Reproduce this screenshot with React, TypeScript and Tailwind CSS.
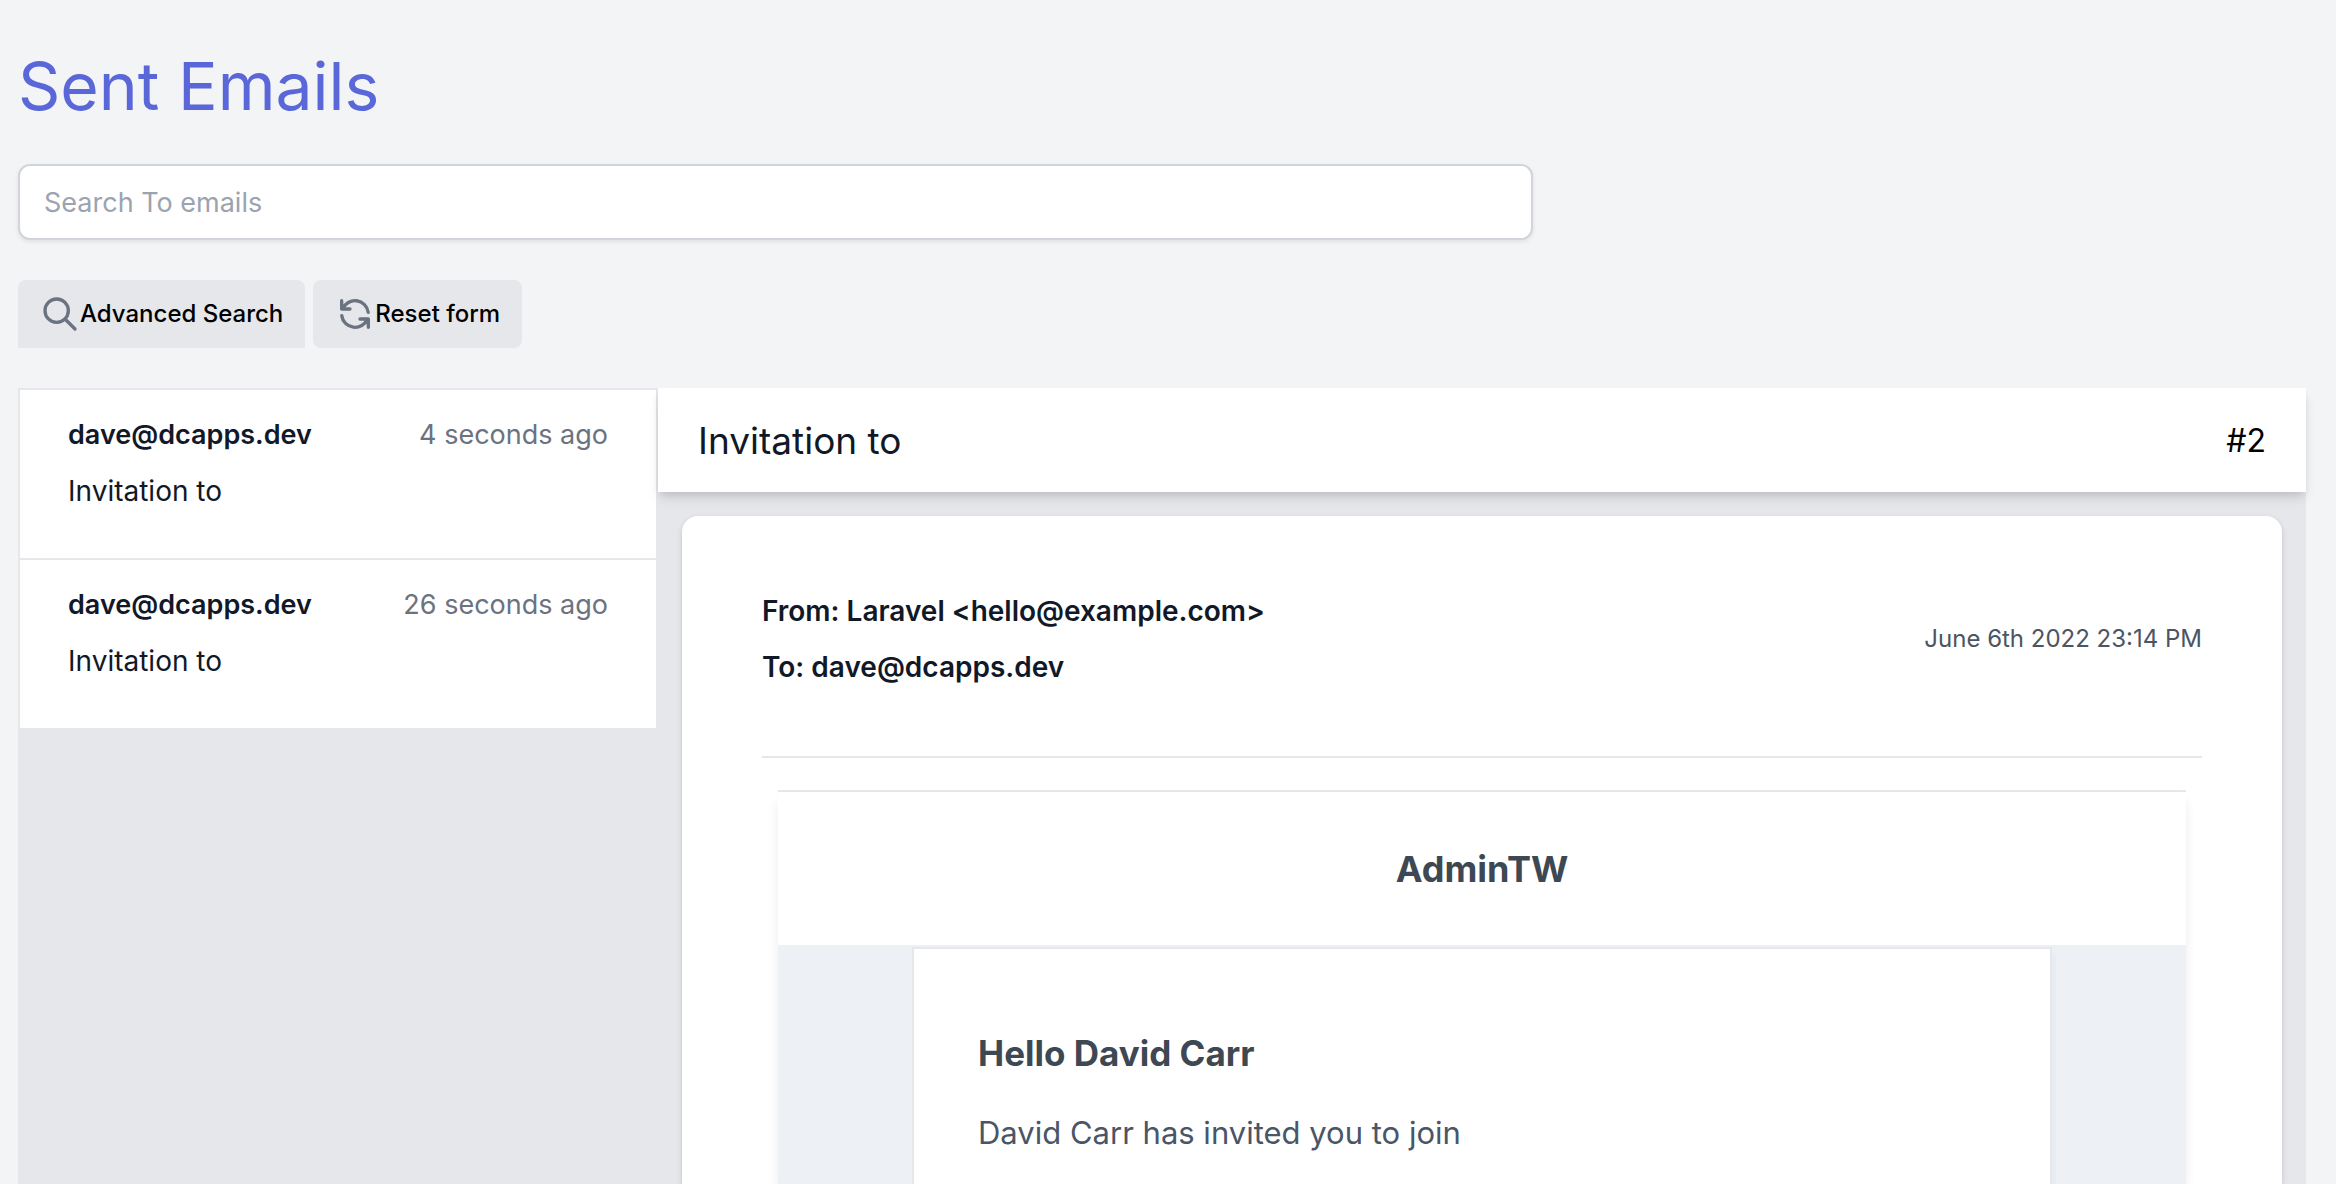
import React from "react";

type SentEmail = { to: string; sent: string; subject: string };

const emails: SentEmail[] = [
  { to: "dave@dcapps.dev", sent: "4 seconds ago", subject: "Invitation to" },
  { to: "dave@dcapps.dev", sent: "26 seconds ago", subject: "Invitation to" },
];

function Icon({ d }: { d: string }) {
  return (
    <svg
      className="size-10 shrink-0 text-[#6b7280]"
      viewBox="0 0 24 24"
      fill="none"
      stroke="currentColor"
      strokeWidth={2}
      strokeLinecap="round"
      strokeLinejoin="round"
      aria-hidden="true"
    >
      <path d={d} />
    </svg>
  );
}

function SearchForm() {
  return (
    <form onSubmit={(e) => e.preventDefault()}>
      <div className="grid grid-cols-3 gap-8">
        <input
          type="search"
          aria-label="Search To emails"
          placeholder="Search To emails"
          className="col-span-2 h-[76px] rounded-xl border-2 border-[#d1d5db] bg-white px-6 text-[27px] shadow-[0_2px_4px_rgb(0_0_0/0.08)] outline-none placeholder:text-[#9ca3af]"
        />
      </div>
      <div className="mt-10 flex gap-2">
        <button
          type="button"
          className="flex h-[68px] items-center rounded-t-lg bg-[#e5e7eb] px-[22px] text-2xl font-medium text-black"
        >
          <Icon d="M21 21l-6-6m2-5a7 7 0 11-14 0 7 7 0 0114 0z" />
          Advanced Search
        </button>
        <button
          type="reset"
          className="flex h-[68px] items-center rounded-lg bg-[#e5e7eb] px-[22px] text-2xl font-medium text-black"
        >
          <Icon d="M4 4v5h.582m15.356 2A8.001 8.001 0 004.582 9m0 0H9m11 11v-5h-.581m0 0a8.003 8.003 0 01-15.357-2m15.357 2H15" />
          Reset form
        </button>
      </div>
    </form>
  );
}

function EmailList() {
  return (
    <ul className="w-[640px] shrink-0 px-0.5">
      {emails.map((email) => (
        <li key={email.sent} className="border-t-2 border-[#e5e7eb] bg-white">
          <a href="#message" className="block px-12 pt-[25px] pb-[47px]">
            <div className="flex items-center justify-between text-[27px] leading-10">
              <h3 className="font-semibold text-[#111827]">{email.to}</h3>
              <p className="text-[#6b7280]">{email.sent}</p>
            </div>
            <p className="mt-4 text-[28px] leading-10 text-[#111827]">{email.subject}</p>
          </a>
        </li>
      ))}
    </ul>
  );
}

function MessageBody() {
  return (
    <div className="mx-4 mt-8 flex flex-1 flex-col border-t-2 border-[#e5e7eb]">
      <div className="flex flex-1 flex-col shadow-[0_8px_12px_-2px_rgb(0_0_0/0.1)]">
        <div className="bg-white pt-[58px] pb-14 text-center text-[36px] leading-[39px] font-bold text-[#3d4852]">
          AdminTW
        </div>
        <div className="flex flex-1 justify-center bg-[#edf1f6] pt-0.5">
          <div className="w-full max-w-[1140px] border-2 border-b-0 border-[#e5e7eb] bg-white px-16 pt-20 shadow-[4px_8px_0_rgb(0_0_150/0.02)]">
            <h1 className="text-[35px] leading-12 font-bold text-[#3d4852]">Hello David Carr</h1>
            <p className="mt-8 text-[31px] leading-12 text-[#4a5568]">
              David Carr has invited you to join
            </p>
          </div>
        </div>
      </div>
    </div>
  );
}

function Message() {
  return (
    <section id="message" className="flex min-w-0 flex-1 flex-col">
      <header className="flex h-[104px] shrink-0 items-center justify-between bg-white px-10 pt-0.5 shadow-[0_8px_12px_-2px_rgb(0_0_0/0.1),0_4px_8px_-2px_rgb(0_0_0/0.1)]">
        <h2 className="text-[37px] text-[#111827]">Invitation to</h2>
        <span className="text-[32px] text-black">#2</span>
      </header>
      <article className="mx-6 mt-6 flex flex-1 flex-col rounded-t-2xl bg-white px-20 pt-20 shadow-[0_2px_6px_rgb(0_0_0/0.1),0_2px_4px_rgb(0_0_0/0.06)]">
        <div className="flex items-center justify-between border-b-2 border-[#e5e7eb] pb-[74px]">
          <div className="flex flex-col gap-[26px] text-[28px] leading-[30px] font-semibold text-[#111827]">
            <p>{"From: Laravel <hello@example.com>"}</p>
            <p>To: dave@dcapps.dev</p>
          </div>
          <time className="text-2xl text-[#4b5563]">June 6th 2022 23:14 PM</time>
        </div>
        <MessageBody />
      </article>
    </section>
  );
}

export default function App() {
  return (
    <main className="flex h-screen flex-col overflow-hidden bg-[#f3f4f6] pr-[30px] pl-[18px] font-[Inter,sans-serif]">
      <h1 className="pt-12 pb-10 text-[66px] leading-[76px] text-[#5a67d8]">Sent Emails</h1>
      <SearchForm />
      <div className="mt-10 flex flex-1 bg-[#e5e7eb]">
        <EmailList />
        <Message />
      </div>
    </main>
  );
}
